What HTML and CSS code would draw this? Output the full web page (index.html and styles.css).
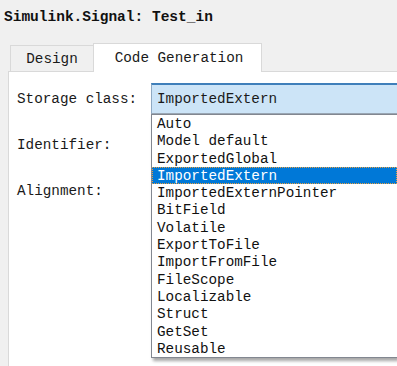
FILE: index.html
```html
<!DOCTYPE html>
<html>

<head>
    <title>Simulink.Signal: Test_in</title>
    <link rel="stylesheet" href="styles.css">
</head>

<body>

    <div class="title">Simulink.Signal: Test_in</div>

    <div class="tabs">
        <div class="tab">Design</div>
        <div class="tab tab-active">Code Generation</div>
    </div>

    <div class="panel">
        <div class="row">
            <label>Storage class:</label>
            <div class="combo-wrap">
                <div class="combo">ImportedExtern</div>
                <ul class="drop-list">
                    <li>Auto</li>
                    <li>Model default</li>
                    <li>ExportedGlobal</li>
                    <li class="picked">ImportedExtern</li>
                    <li>ImportedExternPointer</li>
                    <li>BitField</li>
                    <li>Volatile</li>
                    <li>ExportToFile</li>
                    <li>ImportFromFile</li>
                    <li>FileScope</li>
                    <li>Localizable</li>
                    <li>Struct</li>
                    <li>GetSet</li>
                    <li>Reusable</li>
                </ul>
            </div>
        </div>
        <div class="row">
            <label>Identifier:</label>
        </div>
        <div class="row">
            <label>Alignment:</label>
        </div>
    </div>

</body>

</html>
```

FILE: styles.css
```css
html,
body {
    margin: 0;
    height: 100%;
    overflow: hidden;
}

body {
    background-color: #f0f0f0;
    font-family: "Liberation Mono", "DejaVu Sans Mono", monospace;
    font-size: 14.3px;
    color: #1a1a1a;
}

.title {
    height: 34px;
    padding: 9px 0 0 4px;
    line-height: 17px;
    font-size: 14.5px;
    font-weight: bold;
    color: #111;
}

.tabs {
    display: flex;
    align-items: flex-end;
    height: 28px;
    padding-left: 10px;
}

.tab {
    box-sizing: border-box;
    width: 84px;
    height: 26px;
    line-height: 26px;
    text-align: center;
    border: 1px solid #d9d9d9;
    border-bottom: none;
    background-color: #f0f0f0;
}

.tab-active {
    width: 169px;
    height: 29px;
    line-height: 28px;
    margin-bottom: -1px;
    margin-left: -1px;
    padding-left: 3px;
    background-color: #fff;
    position: relative;
}

.panel {
    box-sizing: border-box;
    margin-left: 8px;
    height: calc(100% - 71px);
    overflow: hidden;
    border-top: 1px solid #d9d9d9;
    border-left: 1px solid #d9d9d9;
    background-color: #fff;
    padding: 11px 0 0 8px;
    display: flex;
    flex-direction: column;
    gap: 15px;
}

.row {
    display: flex;
    align-items: center;
    height: 31px;
}

.row label {
    width: 134px;
    flex-shrink: 0;
}

.combo-wrap {
    position: relative;
    flex: 1;
    align-self: stretch;
}

.combo {
    box-sizing: border-box;
    height: 31px;
    padding-left: 5px;
    padding-top: 1px;
    line-height: 27px;
    background-color: #cce4f7;
    border: 1px solid #8fa9c2;
    border-top: 2px solid #3f7fba;
    border-bottom: 1px solid #9aa7b4;
    border-right: none;
}

.drop-list {
    position: absolute;
    top: 100%;
    left: 0;
    right: 0;
    margin: 0;
    padding: 0;
    list-style: none;
    background-color: #fff;
    border: 1px solid #828790;
    border-right: none;
    box-shadow: 2px 3px 3px rgba(0, 0, 0, 0.35);
}

.drop-list li {
    height: 15.3px;
    line-height: 15.3px;
    padding: 2px 0 0 5px;
    color: #111;
}

.drop-list li.picked {
    background-color: #0078d7;
    color: #fff;
    outline: 1px dotted #e8a040;
    outline-offset: -1px;
}
```
